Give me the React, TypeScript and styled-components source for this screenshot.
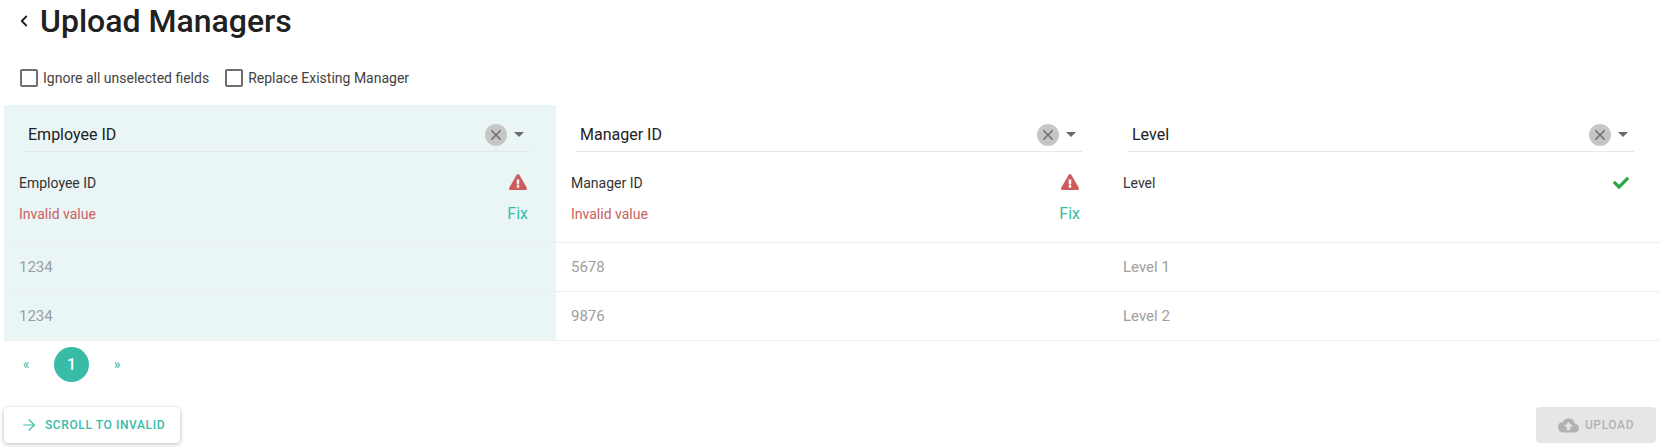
import React from 'react';
import styled, { createGlobalStyle } from 'styled-components';
import { ChevronLeft, ArrowRight } from 'lucide-react';
import { FaExclamationTriangle, FaCheck } from 'react-icons/fa';
import { MdClose, MdCloudUpload } from 'react-icons/md';

const GlobalStyle = createGlobalStyle`
  html, body {
    margin: 0;
    padding: 0;
    background: #ffffff;
    font-family: 'Roboto', 'Liberation Sans', sans-serif;
    color: #212121;
  }
  * { box-sizing: border-box; }
`;

const Page = styled.div`
  width: 1664px;
  height: 447px;
  overflow: hidden;
  padding: 0 4px;
`;

const Header = styled.div`
  display: flex;
  align-items: center;
  height: 43px;
  padding-left: 11px;
  gap: 7px;
`;

const BackIcon = styled(ChevronLeft)`
  width: 18px;
  height: 18px;
  color: #212121;
  stroke-width: 2.4;
  margin-bottom: 2px;
`;

const Title = styled.h1`
  margin: 0;
  font-size: 32px;
  line-height: 43px;
  font-weight: 500;
  color: #212121;
`;

const Options = styled.div`
  display: flex;
  align-items: center;
  gap: 16px;
  height: 62px;
  padding: 8px 0 0 16px;
`;

const CheckLabel = styled.label`
  display: flex;
  align-items: center;
  gap: 5px;
  font-size: 14px;
  color: #424242;
`;

const CheckBox = styled.span`
  width: 18px;
  height: 18px;
  border: 2px solid #6e6e6e;
  border-radius: 2px;
  background: #fff;
`;

const Table = styled.div`
  display: grid;
  grid-template-columns: repeat(3, 552px);
`;

const Column = styled.div<{ $active?: boolean }>`
  background: ${p => (p.$active ? '#eaf6f6' : 'transparent')};
`;

const SelectArea = styled.div`
  padding: 13px 26px 0 20px;
  height: 47px;
`;

const Select = styled.div`
  display: flex;
  align-items: center;
  height: 34px;
  border-bottom: 1px solid #e3e7e7;
  padding: 0 0 0 4px;
  font-size: 16px;
  color: #212121;
`;

const SelectValue = styled.span`
  flex: 1;
`;

const ClearButton = styled.span`
  display: flex;
  align-items: center;
  justify-content: center;
  width: 22px;
  height: 22px;
  border-radius: 50%;
  background: #c6c6c6;
  color: #6f6f6f;
  font-size: 18px;
`;

const Caret = styled.span`
  width: 0;
  height: 0;
  margin: 0 6px 0 7px;
  border-left: 5px solid transparent;
  border-right: 5px solid transparent;
  border-top: 5px solid #6b6b6b;
`;

const HeadCell = styled.div`
  height: 91px;
  padding: 15px 28px 0 15px;
  border-bottom: 1px solid #eeeeee;
`;

const HeadRow = styled.div`
  display: flex;
  align-items: center;
  justify-content: space-between;
  height: 31px;
  font-size: 14px;
  color: #333333;
`;

const InvalidText = styled.span`
  color: #c96060;
`;

const FixLink = styled.span`
  font-size: 16px;
  color: #38bca8;
`;

const WarnIcon = styled(FaExclamationTriangle)`
  color: #cd5c5c;
  font-size: 18px;
  margin: 0 1px 2px 0;
`;

const OkIcon = styled(FaCheck)`
  color: #28a745;
  font-size: 16px;
  margin-right: 3px;
`;

const ValueCell = styled.div`
  display: flex;
  align-items: center;
  height: 49px;
  padding-left: 15px;
  font-size: 15px;
  color: #9e9e9e;
  border-bottom: 1px solid #eeeeee;
`;

const Pagination = styled.div`
  display: flex;
  align-items: center;
  gap: 6px;
  height: 46px;
`;

const PageArrow = styled.span`
  display: flex;
  justify-content: center;
  width: 44px;
  font-size: 14px;
  color: #38bca8;
`;

const PageCurrent = styled.span`
  display: flex;
  align-items: center;
  justify-content: center;
  width: 35px;
  height: 35px;
  border-radius: 50%;
  background: #38bca8;
  color: #fff;
  font-size: 16px;
  font-weight: 500;
`;

const Footer = styled.div`
  display: flex;
  align-items: center;
  justify-content: space-between;
  margin-top: 20px;
  padding-right: 4px;
`;

const ScrollButton = styled.button`
  display: flex;
  align-items: center;
  gap: 7px;
  width: 176px;
  height: 36px;
  padding: 0 0 0 16px;
  border: none;
  border-radius: 4px;
  background: #fff;
  color: #38bca8;
  font: 500 12px 'Roboto', sans-serif;
  letter-spacing: 0.6px;
  box-shadow: 0 1px 4px rgba(0, 0, 0, 0.28);
`;

const UploadButton = styled.button`
  display: flex;
  align-items: center;
  justify-content: center;
  gap: 6px;
  width: 120px;
  height: 36px;
  padding: 0;
  border: none;
  border-radius: 4px;
  background: #e6e6e6;
  color: #b2b2b2;
  font: 500 12px 'Roboto', sans-serif;
  letter-spacing: 0.6px;
`;

const columns = [
  { name: 'Employee ID', invalid: true, active: true, values: ['1234', '1234'] },
  { name: 'Manager ID', invalid: true, active: false, values: ['5678', '9876'] },
  { name: 'Level', invalid: false, active: false, values: ['Level 1', 'Level 2'] },
];

export default function App() {
  return (
    <Page>
      <GlobalStyle />
      <Header>
        <BackIcon />
        <Title>Upload Managers</Title>
      </Header>
      <Options>
        <CheckLabel><CheckBox />Ignore all unselected fields</CheckLabel>
        <CheckLabel><CheckBox />Replace Existing Manager</CheckLabel>
      </Options>
      <Table>
        {columns.map(col => (
          <Column key={col.name} $active={col.active}>
            <SelectArea>
              <Select>
                <SelectValue>{col.name}</SelectValue>
                <ClearButton><MdClose /></ClearButton>
                <Caret />
              </Select>
            </SelectArea>
            <HeadCell>
              <HeadRow>
                <span>{col.name}</span>
                {col.invalid ? <WarnIcon /> : <OkIcon />}
              </HeadRow>
              {col.invalid && (
                <HeadRow>
                  <InvalidText>Invalid value</InvalidText>
                  <FixLink>Fix</FixLink>
                </HeadRow>
              )}
            </HeadCell>
            {col.values.map((v, i) => (
              <ValueCell key={i}>{v}</ValueCell>
            ))}
          </Column>
        ))}
      </Table>
      <Pagination>
        <PageArrow>«</PageArrow>
        <PageCurrent>1</PageCurrent>
        <PageArrow>»</PageArrow>
      </Pagination>
      <Footer>
        <ScrollButton><ArrowRight size={18} strokeWidth={1.5} />SCROLL TO INVALID</ScrollButton>
        <UploadButton><MdCloudUpload size={21} />UPLOAD</UploadButton>
      </Footer>
    </Page>
  );
}
